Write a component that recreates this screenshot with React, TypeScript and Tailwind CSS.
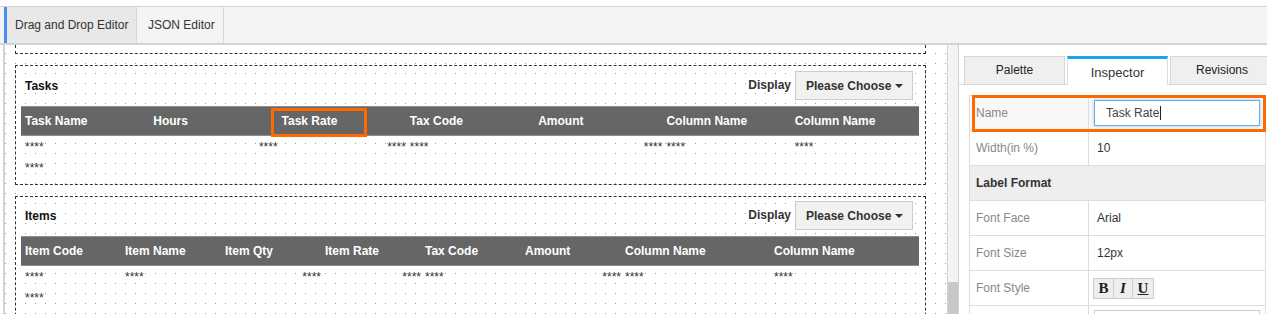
import React from "react";

type Cell = { l?: boolean; r?: boolean };

const Stars = () => <span className="text-[#333]">****</span>;

function DataCell({ c }: { c: Cell }) {
  return (
    <div className="flex justify-between items-center pl-[4px] h-full">
      <span>{c.l ? <Stars /> : null}</span>
      <span>{c.r ? <Stars /> : null}</span>
    </div>
  );
}

function TitleRow({ title }: { title: string }) {
  return (
    <div className="flex items-center justify-between h-[29px] pl-[9px] pr-[12px]">
      <span className="font-bold text-[#111]">{title}</span>
      <div className="flex items-center">
        <span className="font-bold text-[#333] mr-[4px] -mt-[2px]">Display</span>
        <div className="w-[118px] h-[29px] bg-[#f1f1f1] border border-[#cccccc] flex items-center pl-[10px] font-bold text-[#333]">
          Please Choose
          <span className="ml-[4px] mt-[1px] w-0 h-0 border-l-[4px] border-r-[4px] border-t-[4px] border-l-transparent border-r-transparent border-t-[#333]" />
        </div>
      </div>
    </div>
  );
}

const taskCols = ["Task Name", "Hours", "Task Rate", "Tax Code", "Amount", "Column Name", "Column Name"];
const taskRow1: Cell[] = [{ l: true }, { r: true }, { r: true }, { l: true }, { r: true }, { l: true }, { l: true }];
const taskRow2: Cell[] = [{ l: true }, {}, {}, {}, {}, {}, {}];

const itemCols = ["Item Code", "Item Name", "Item Qty", "Item Rate", "Tax Code", "Amount", "Column Name", "Column Name"];
const itemRow1: Cell[] = [{ l: true }, { l: true }, { r: true }, { r: true }, { l: true }, { r: true }, { l: true }, { l: true }];
const itemRow2: Cell[] = [{ l: true }, {}, {}, {}, {}, {}, {}, {}];

function InspRow({
  label,
  children,
  bg = "bg-white",
}: {
  label: string;
  children?: React.ReactNode;
  bg?: string;
}) {
  return (
    <div className={`flex h-[35px] border-b border-[#dddddd] ${bg}`}>
      <div className="w-[119px] border-r border-[#dddddd] flex items-center pl-[6px] text-[#888]">{label}</div>
      <div className="flex-1 flex items-center">{children}</div>
    </div>
  );
}

export default function App() {
  return (
    <div className="w-[1267px] h-[314px] overflow-hidden bg-white font-['Liberation_Sans',Arial,sans-serif] text-[12px] text-[#333]">
      <div className="h-[6px]" />
      {/* top tab bar */}
      <div className="h-[39px] bg-[#f4f4f4] border-t border-b-2 border-[#d4d4d4] flex pl-[4px]">
        <div className="w-[133px] bg-[#e8e8e8] border-l-[3px] border-l-[#4a8ff0] border-r border-r-[#d8d8d8] flex items-center pl-[8px] text-[#333]">
          Drag and Drop Editor
        </div>
        <div className="w-[87px] border-r border-[#d8d8d8] flex items-center pl-[11px] text-[#333]">JSON Editor</div>
      </div>

      <div className="flex h-[269px]">
        <div className="w-[3px]" />
        {/* canvas */}
        <div className="w-[944px] border-l-2 border-[#d4d4d4] [background-image:radial-gradient(circle_at_0.5px_0.5px,#9a9a9a_0.6px,transparent_0.8px)] [background-size:10px_10px] [background-position:0px_8px] pl-[10px] overflow-hidden">
          <div className="w-[911px] h-[9px] border-l border-r border-b border-dashed border-[#333]" />
          {/* Tasks */}
          <div className="w-[911px] mt-[11px] h-[120px] border border-dashed border-[#333] pt-[5px]">
            <TitleRow title="Tasks" />
            <div className="pl-[5px] pr-[6px]">
              <div className="relative mt-[6px] h-[30px] bg-[#666666] border-t border-b border-[#8e8e8e] grid grid-cols-7 items-center text-white font-bold">
                {taskCols.map((c, i) => (
                  <div key={i} className="pl-[4px]">{c}</div>
                ))}
                <div className="absolute left-[250px] top-[1px] w-[96px] h-[29px] border-[3px] border-[#ff6a00]" />
              </div>
              <div className="grid grid-cols-7 h-[21px]">
                {taskRow1.map((c, i) => (
                  <DataCell key={i} c={c} />
                ))}
              </div>
              <div className="grid grid-cols-7 h-[21px]">
                {taskRow2.map((c, i) => (
                  <DataCell key={i} c={c} />
                ))}
              </div>
            </div>
          </div>
          {/* Items */}
          <div className="w-[911px] mt-[11px] h-[140px] border border-dashed border-[#333] pt-[4px]">
            <TitleRow title="Items" />
            <div className="pl-[5px] pr-[6px]">
              <div className="mt-[6px] h-[30px] bg-[#666666] border-t border-b border-[#8e8e8e] grid grid-cols-[100px_100px_100px_100px_100px_100px_1fr_1fr] items-center text-white font-bold">
                {itemCols.map((c, i) => (
                  <div key={i} className="pl-[4px]">{c}</div>
                ))}
              </div>
              <div className="grid grid-cols-[100px_100px_100px_100px_100px_100px_1fr_1fr] h-[21px]">
                {itemRow1.map((c, i) => (
                  <DataCell key={i} c={c} />
                ))}
              </div>
              <div className="grid grid-cols-[100px_100px_100px_100px_100px_100px_1fr_1fr] h-[21px]">
                {itemRow2.map((c, i) => (
                  <DataCell key={i} c={c} />
                ))}
              </div>
            </div>
          </div>
        </div>
        {/* scrollbar */}
        <div className="w-[12px] border-l border-r border-[#d0d0d0] bg-[#f3f3f3] flex flex-col">
          <div className="h-[237px]" />
          <div className="flex-1 bg-[#c8c8c8]" />
        </div>
        {/* right panel */}
        <div className="w-[308px] bg-white pt-[11px]">
          <div className="flex h-[29px] border-b border-[#dddddd] pl-[5px] gap-[2px]">
            <div className="w-[101px] h-[29px] bg-[#efefef] border border-[#d6d6d6] flex items-center justify-center text-[#222] pb-[1px]">
              Palette
            </div>
            <div className="w-[101px] h-[29px] bg-white border-x border-[#dddddd] border-t-[3px] border-t-[#1aa6ee] flex items-center justify-center text-[#333] text-[13px] pt-[1px]">
              Inspector
            </div>
            <div className="flex-1 h-[29px] bg-[#efefef] border-t border-l border-b border-[#d6d6d6] flex items-center pl-[25px] text-[#222] pb-[1px]">
              Revisions
            </div>
          </div>
          <div className="pl-[10px] pr-[1px] pt-[10px]">
            <div className="border-t border-l border-r border-[#dddddd]">
              <div className="relative">
                <InspRow label="Name" bg="bg-[#f8f8f8]">
                  <div className="ml-[5px] w-[166px] h-[26px] bg-white border border-[#66afe9] shadow-[0_0_3px_rgba(102,175,233,0.6)] flex items-center pl-[11px] text-[#444]">
                    Task Rate
                    <span className="ml-[1px] w-[1px] h-[14px] bg-[#222]" />
                  </div>
                </InspRow>
                <div className="absolute left-[2px] -right-[1px] -top-[1px] h-[37px] border-[3px] border-[#ff6a00]" />
              </div>
              <InspRow label="Width(in %)">
                <span className="pl-[8px] text-[#333]">10</span>
              </InspRow>
              <div className="h-[35px] border-b border-[#dddddd] bg-[#eeeeee] flex items-center pl-[6px] font-bold text-[#333]">
                Label Format
              </div>
              <InspRow label="Font Face">
                <span className="pl-[8px] text-[#333]">Arial</span>
              </InspRow>
              <InspRow label="Font Size">
                <span className="pl-[8px] text-[#333]">12px</span>
              </InspRow>
              <InspRow label="Font Style">
                <div className="ml-[4px] flex h-[21px] border border-[#cccccc] font-['Liberation_Serif','Times_New_Roman',serif] text-[15px] font-bold text-[#222]">
                  <div className="w-[20px] bg-[#eeeeee] border-r border-[#cccccc] flex items-center justify-center">B</div>
                  <div className="w-[19px] bg-[#eeeeee] border-r border-[#cccccc] flex items-center justify-center italic">I</div>
                  <div className="w-[20px] bg-[#eeeeee] flex items-center justify-center underline">U</div>
                </div>
              </InspRow>
              <div className="flex h-[35px]">
                <div className="w-[119px] border-r border-[#dddddd]" />
                <div className="flex-1 pt-[4px]">
                  <div className="ml-[5px] w-[166px] h-[26px] border border-[#cccccc]" />
                </div>
              </div>
            </div>
          </div>
        </div>
      </div>
    </div>
  );
}
